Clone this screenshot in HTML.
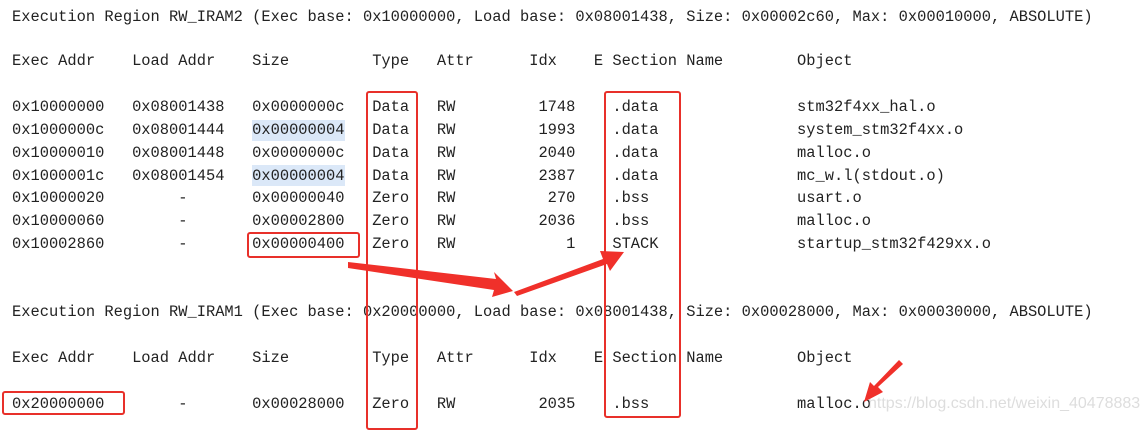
<!DOCTYPE html>
<html><head><style>
body{margin:0;width:1147px;height:420px;background:#fff;position:relative;overflow:hidden;font-family:"Liberation Mono",monospace;font-size:15.4px;color:#222}
pre{margin:0;position:absolute;left:12px;font:inherit;line-height:18px}
.hl{position:absolute;background:#dbe8f8;left:252px;width:93px;height:21px}
.box{position:absolute;border:2.5px solid #e8302a;border-radius:3px}
.wm{position:absolute;left:868px;top:395px;font-family:"Liberation Sans",sans-serif;font-size:16px;color:rgba(180,180,180,.45)}
</style></head><body>
<div class="hl" style="top:120px"></div>
<div class="hl" style="top:165px"></div>
<pre style="top:8px">Execution Region RW_IRAM2 (Exec base: 0x10000000, Load base: 0x08001438, Size: 0x00002c60, Max: 0x00010000, ABSOLUTE)</pre>
<pre style="top:52px">Exec Addr    Load Addr    Size         Type   Attr      Idx    E Section Name        Object</pre>
<pre style="top:98px">0x10000000   0x08001438   0x0000000c   Data   RW         1748    .data               stm32f4xx_hal.o</pre>
<pre style="top:121px">0x1000000c   0x08001444   0x00000004   Data   RW         1993    .data               system_stm32f4xx.o</pre>
<pre style="top:144px">0x10000010   0x08001448   0x0000000c   Data   RW         2040    .data               malloc.o</pre>
<pre style="top:167px">0x1000001c   0x08001454   0x00000004   Data   RW         2387    .data               mc_w.l(stdout.o)</pre>
<pre style="top:189px">0x10000020        -       0x00000040   Zero   RW          270    .bss                usart.o</pre>
<pre style="top:212px">0x10000060        -       0x00002800   Zero   RW         2036    .bss                malloc.o</pre>
<pre style="top:235px">0x10002860        -       0x00000400   Zero   RW            1    STACK               startup_stm32f429xx.o</pre>
<pre style="top:303px">Execution Region RW_IRAM1 (Exec base: 0x20000000, Load base: 0x08001438, Size: 0x00028000, Max: 0x00030000, ABSOLUTE)</pre>
<pre style="top:349px">Exec Addr    Load Addr    Size         Type   Attr      Idx    E Section Name        Object</pre>
<pre style="top:395px">0x20000000        -       0x00028000   Zero   RW         2035    .bss                malloc.o</pre>
<div class="wm">https://blog.csdn.net/weixin_40478883</div>
<div class="box" style="left:247px;top:232px;width:109px;height:22px"></div>
<div class="box" style="left:366px;top:91px;width:48px;height:335px"></div>
<div class="box" style="left:604px;top:91px;width:73px;height:323px"></div>
<div class="box" style="left:2px;top:391px;width:119px;height:20px"></div>
<svg width="1147" height="420" style="position:absolute;left:0;top:0">
<g fill="#f0302a">
<polygon points="348,262 496,279 494,272 513,291 492,297 494,290 348,268"/>
<polygon points="514,292 603,259 600,251 624,252 610,271 607,264 517,296"/>
<polygon points="903,364 878,387 883,392 864,402 870,382 874,386 899,360"/>
</g>
</svg>
</body></html>
